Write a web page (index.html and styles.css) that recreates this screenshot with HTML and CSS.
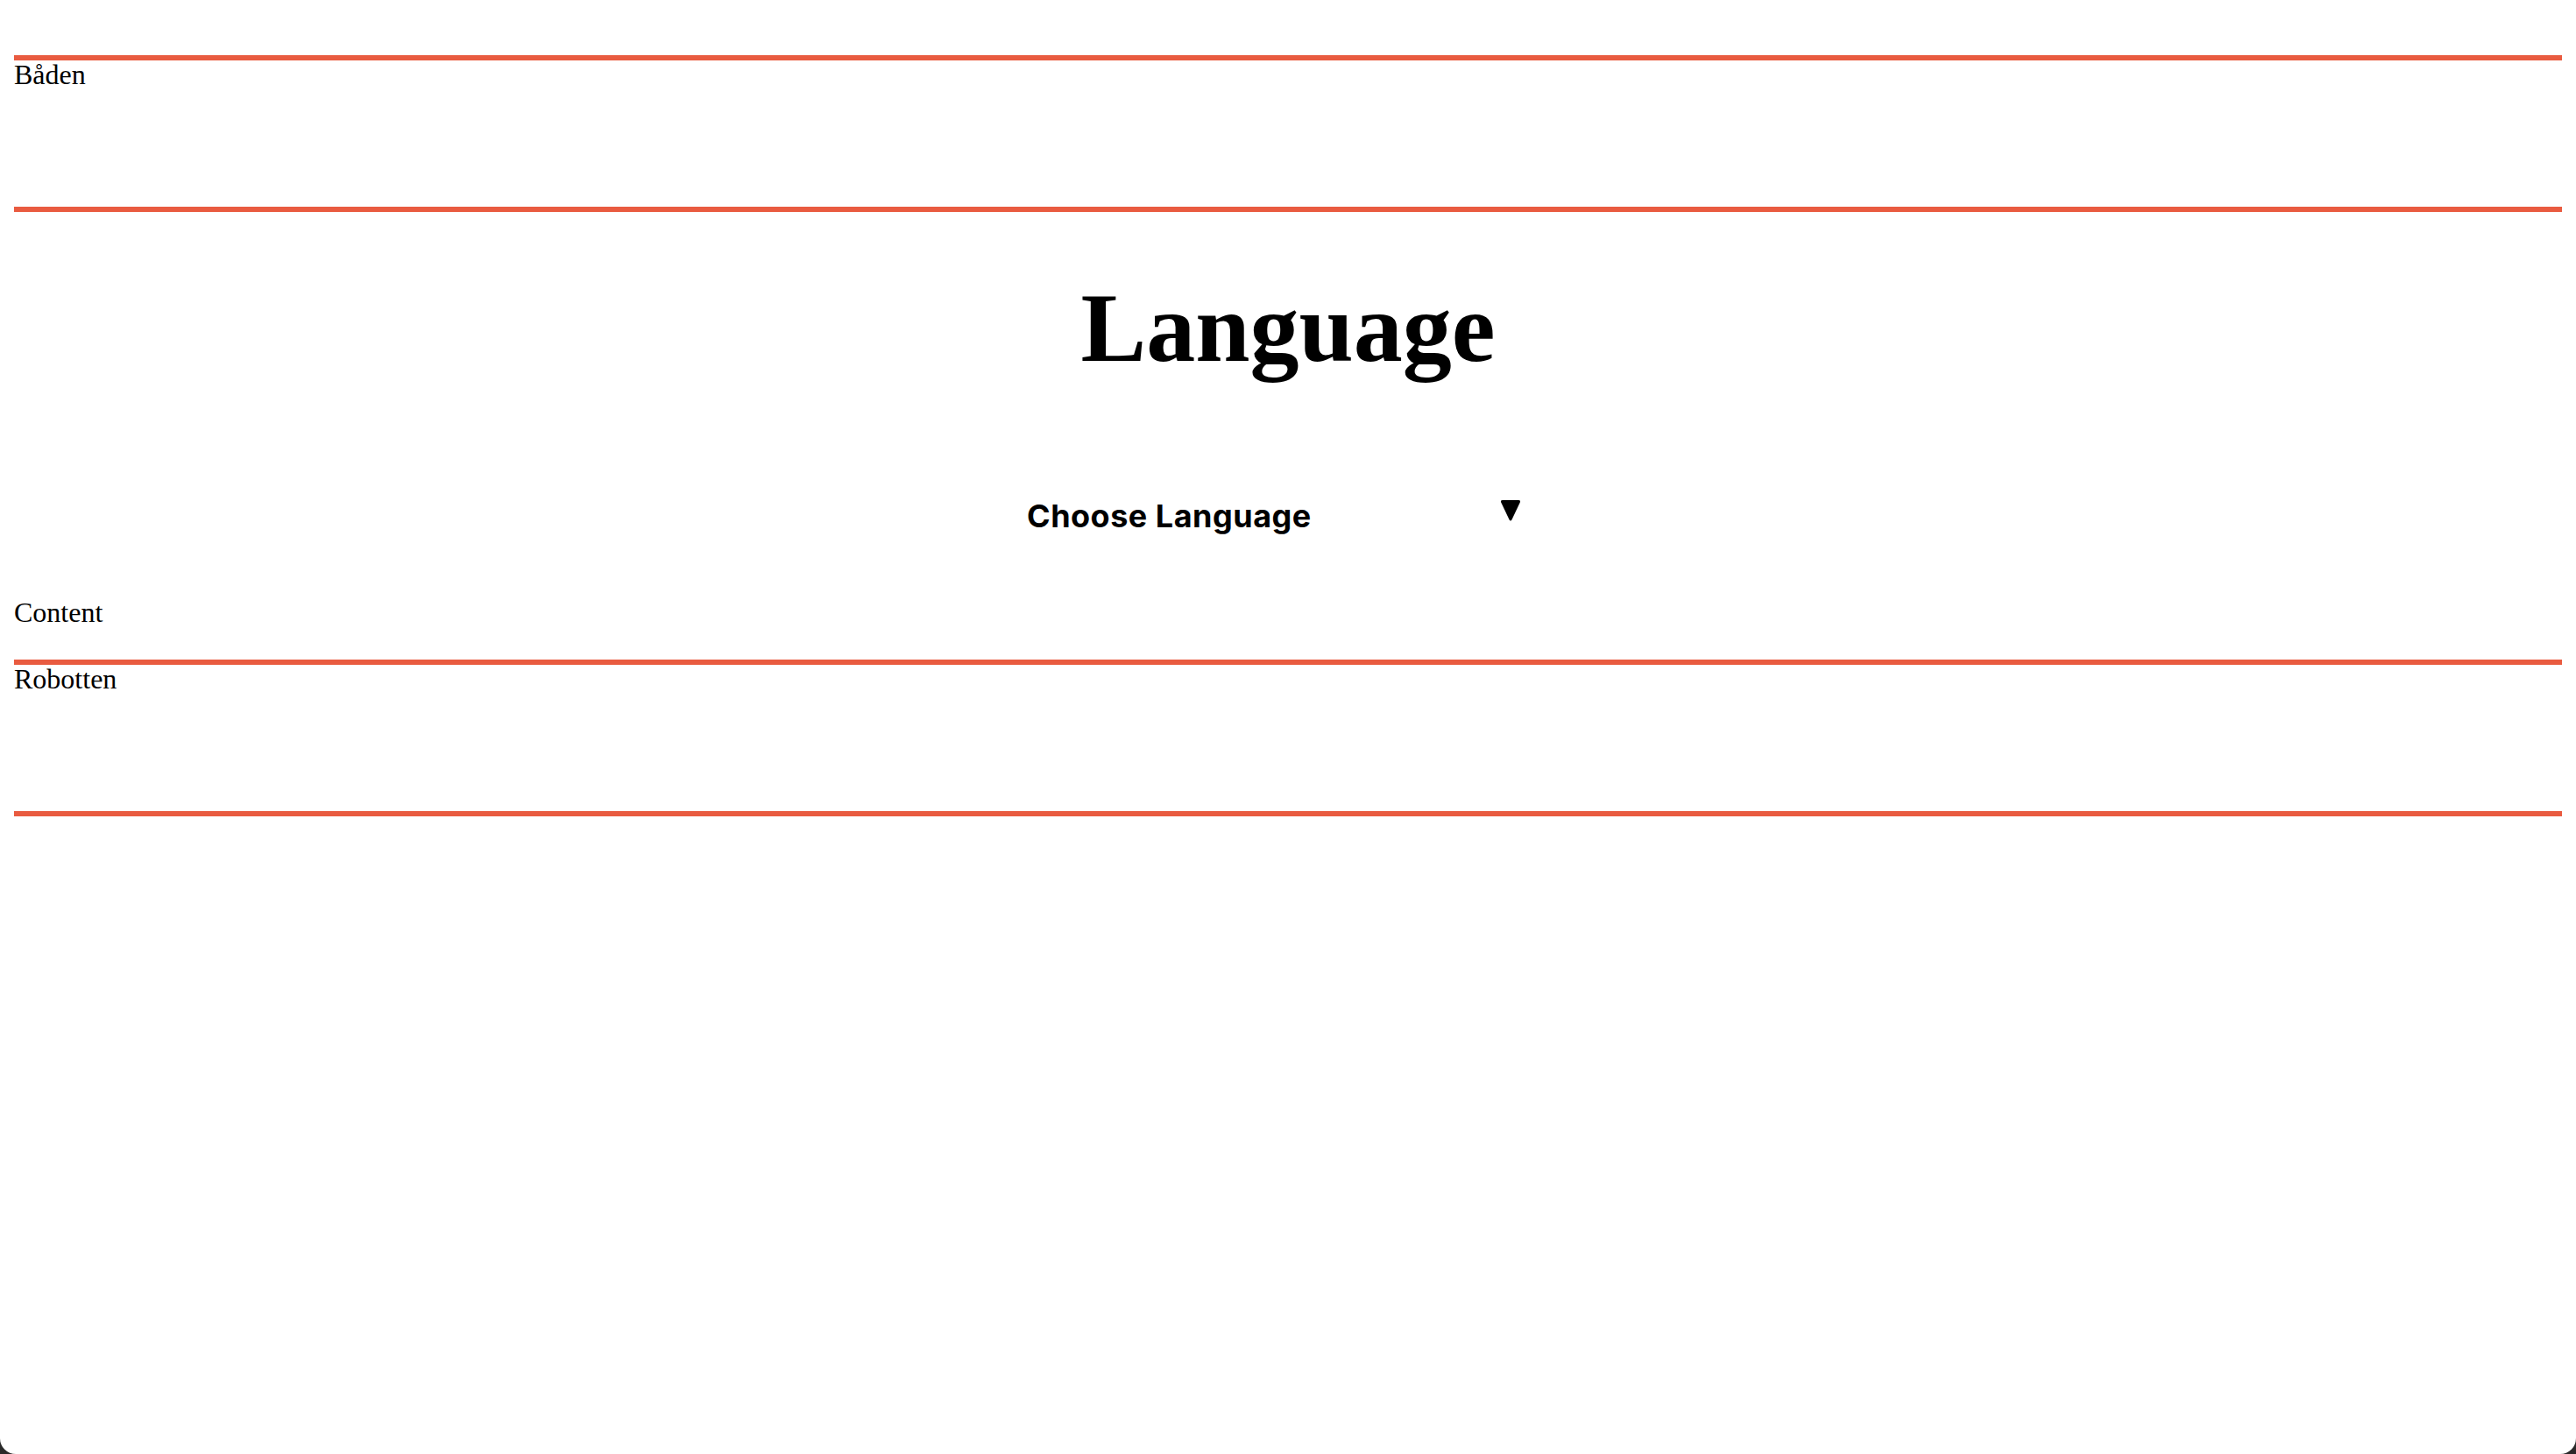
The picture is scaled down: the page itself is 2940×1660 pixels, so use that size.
FILE: index.html
```html
<!DOCTYPE html>
<html lang="da">
<head>
<meta charset="utf-8">
<title>Language</title>
<link rel="stylesheet" href="styles.css">
</head>
<body>
  <header class="band band-top">Båden</header>
  <main class="main">
    <h1 class="title">Language</h1>
    <div class="picker">
      <div class="select">
        <span class="select-label">Choose Language</span>
        <span class="select-arrow" aria-hidden="true">
          <svg width="24" height="25" viewBox="0 0 24 25"><path d="M3 1 H21 Q24 1 22.6 4 L13.6 23 Q12 26 10.4 23 L1.4 4 Q0 1 3 1 Z" fill="#000"/></svg>
        </span>
      </div>
    </div>
    <p class="content">Content</p>
  </main>
  <footer class="band band-bottom">Robotten</footer>
</body>
</html>
```

FILE: styles.css
```css
html {
  background: #2a2a2a;
}

body {
  margin: 0;
  padding: 16px;
  box-sizing: border-box;
  min-height: 100vh;
  background: #ffffff;
  border-radius: 0 0 18px 18px;
  font-family: "Liberation Serif", "Times New Roman", serif;
  font-size: 32px;
  line-height: normal;
  color: #000;
}

.band {
  border-top: 6px solid #e95b40;
  border-bottom: 6px solid #e95b40;
  height: 167px;
  line-height: 32px;
}

.band-top {
  margin-top: 47px;
}

.band-bottom {
  margin-top: 38px;
}

.main {
  display: flex;
  flex-direction: column;
}

.title {
  margin: 68px 0 0;
  font-size: 112px;
  font-weight: bold;
  text-align: center;
  line-height: normal;
}

.picker {
  display: flex;
  justify-content: center;
  margin-top: 130px;
}

.select {
  width: 640px;
  display: flex;
  align-items: flex-start;
  justify-content: space-between;
  padding: 0 54px 0 22px;
  box-sizing: border-box;
}

.select-label {
  font-family: "Inter", "Noto Sans", sans-serif;
  font-weight: 700;
  font-size: 36px;
  line-height: 40px;
  letter-spacing: 0.5px;
}

.select-arrow {
  display: flex;
  margin-top: 1px;
}

.content {
  margin: 74px 0 0;
  line-height: 32px;
}
```
